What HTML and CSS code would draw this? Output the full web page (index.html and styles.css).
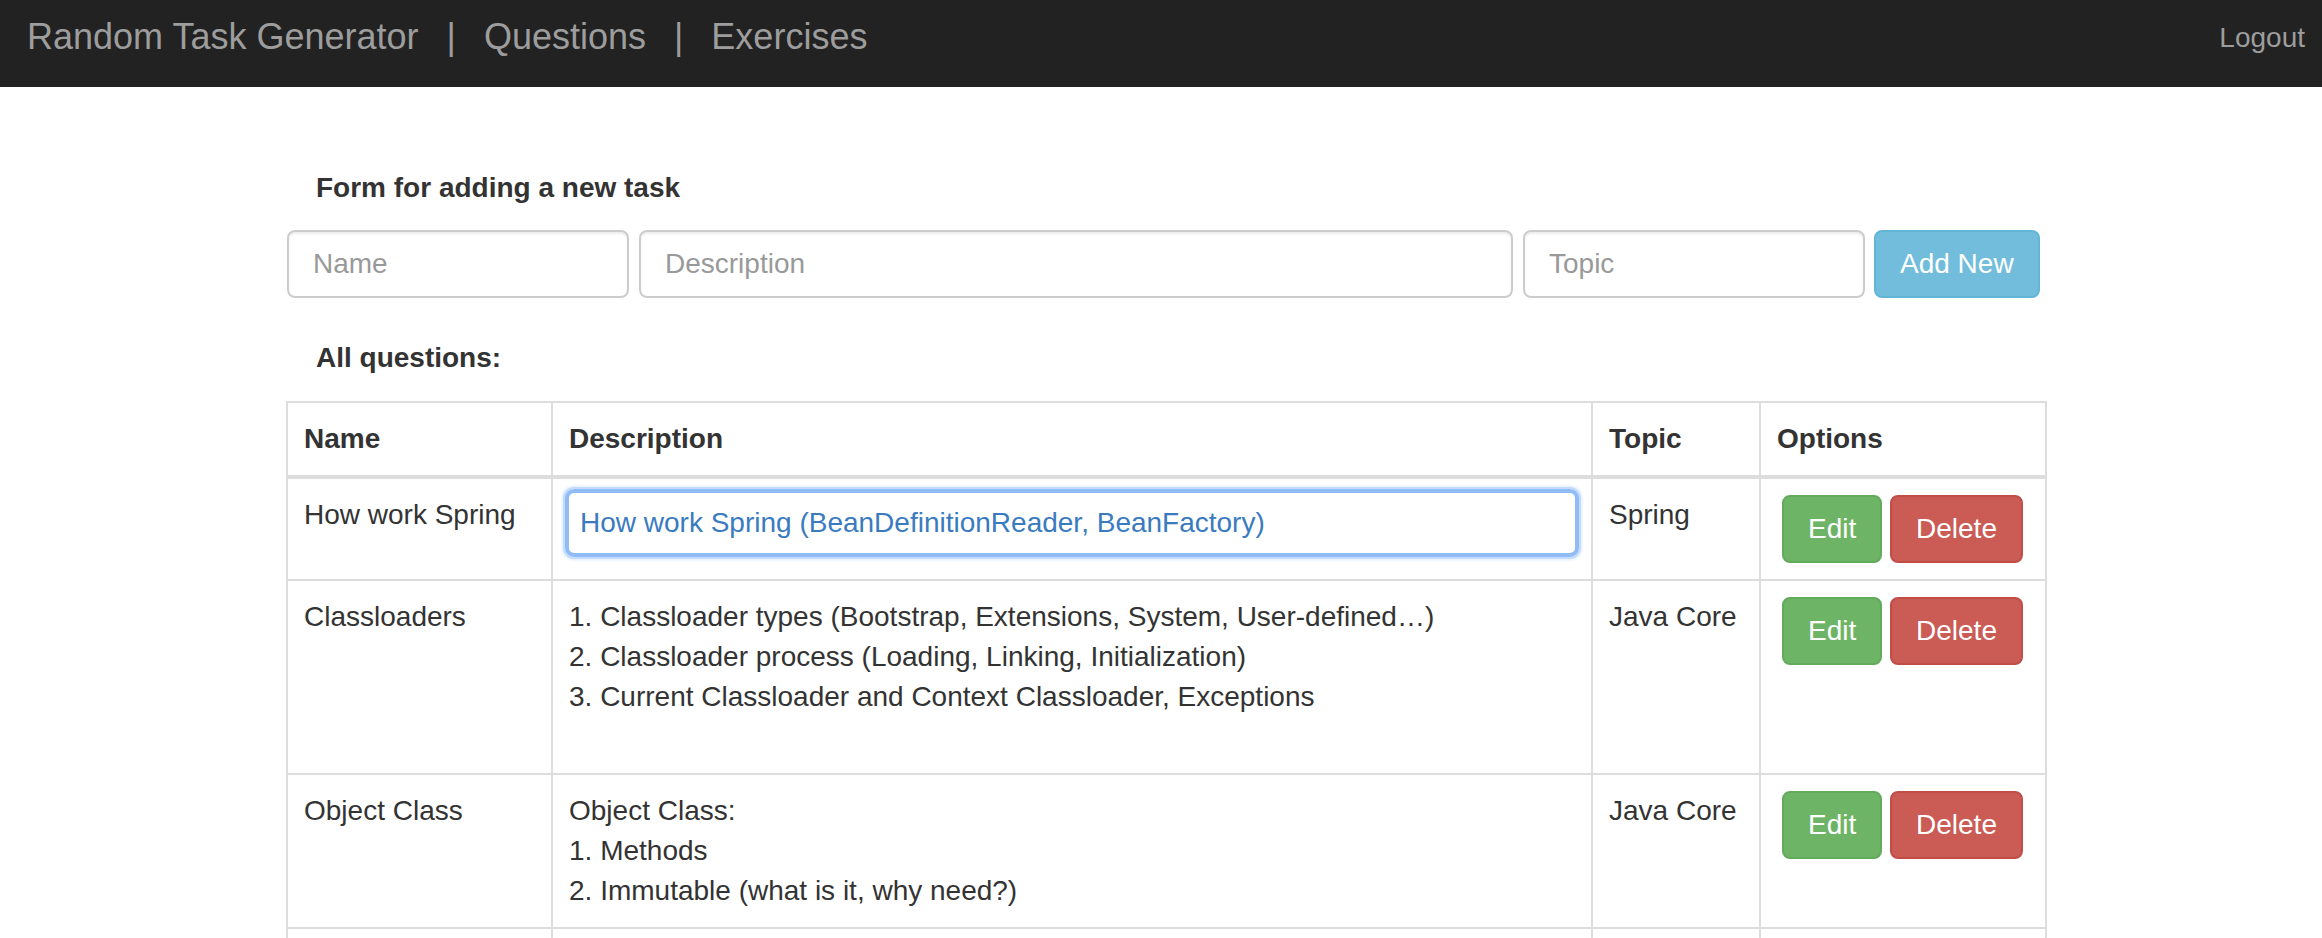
FILE: index.html
```html
<!DOCTYPE html>
<html lang="en">
<head>
<meta charset="utf-8">
<title>Random Task Generator - Questions</title>
<link rel="stylesheet" href="styles.css">
</head>
<body>
<nav class="navbar">
  <div class="nav-left">
    <a class="nav-brand" href="#">Random Task Generator</a>
    <span class="nav-sep">|</span>
    <a class="nav-link" href="#">Questions</a>
    <span class="nav-sep">|</span>
    <a class="nav-link" href="#">Exercises</a>
  </div>
  <a class="nav-logout" href="#">Logout</a>
</nav>

<main class="main">
  <h4 class="section-title form-title">Form for adding a new task</h4>
  <form class="add-form">
    <input class="field field-name" type="text" placeholder="Name">
    <input class="field field-desc" type="text" placeholder="Description">
    <input class="field field-topic" type="text" placeholder="Topic">
    <button class="btn btn-info" type="button">Add New</button>
  </form>

  <h4 class="section-title all-title">All questions:</h4>

  <table class="tasks">
    <colgroup>
      <col class="col-name">
      <col class="col-desc">
      <col class="col-topic">
      <col class="col-options">
    </colgroup>
    <thead>
      <tr>
        <th>Name</th>
        <th>Description</th>
        <th>Topic</th>
        <th>Options</th>
      </tr>
    </thead>
    <tbody>
      <tr>
        <td>How work Spring</td>
        <td><div class="desc-edit">How work Spring (BeanDefinitionReader, BeanFactory)</div></td>
        <td>Spring</td>
        <td><div class="actions"><button class="btn btn-success" type="button">Edit</button> <button class="btn btn-danger" type="button">Delete</button></div></td>
      </tr>
      <tr>
        <td>Classloaders</td>
        <td>1. Classloader types (Bootstrap, Extensions, System, User-defined…)<br>2. Classloader process (Loading, Linking, Initialization)<br>3. Current Classloader and Context Classloader, Exceptions<br>&nbsp;</td>
        <td>Java Core</td>
        <td><div class="actions"><button class="btn btn-success" type="button">Edit</button> <button class="btn btn-danger" type="button">Delete</button></div></td>
      </tr>
      <tr>
        <td>Object Class</td>
        <td>Object Class:<br>1. Methods<br>2. Immutable (what is it, why need?)</td>
        <td>Java Core</td>
        <td><div class="actions"><button class="btn btn-success" type="button">Edit</button> <button class="btn btn-danger" type="button">Delete</button></div></td>
      </tr>
      <tr>
        <td>&nbsp;</td>
        <td>&nbsp;</td>
        <td>&nbsp;</td>
        <td>&nbsp;</td>
      </tr>
    </tbody>
  </table>
</main>
</body>
</html>
```

FILE: styles.css
```css
* {
  box-sizing: border-box;
}

body {
  margin: 0;
  background: #fff;
  color: #333;
  font-family: "Liberation Sans", Arial, Helvetica, sans-serif;
  font-size: 28px;
  line-height: 40px;
}

/* ---------- navbar ---------- */
.navbar {
  height: 87px;
  background: #222;
  display: flex;
  align-items: flex-start;
  padding: 17px 17px 0 27px;
}

.nav-left {
  display: flex;
  gap: 28px;
  font-size: 36px;
  line-height: 40px;
  color: #9d9d9d;
}

.nav-brand,
.nav-link {
  color: #9d9d9d;
  text-decoration: none;
}

.nav-sep {
  color: #9d9d9d;
}

.nav-logout {
  margin-left: auto;
  margin-top: 1px;
  font-size: 28px;
  line-height: 40px;
  color: #9d9d9d;
  text-decoration: none;
}

/* ---------- main ---------- */
.main {
  width: 1759px;
  margin-left: 286px;
  padding-top: 81px;
}

.section-title {
  margin: 0;
  padding-left: 30px;
  font-size: 28px;
  line-height: 40px;
  font-weight: bold;
}

.form-title {
  margin-bottom: 22px;
}

.all-title {
  margin-top: 40px;
}

/* ---------- form ---------- */
.add-form {
  display: flex;
  margin: 0;
  padding-left: 1px;
}

.field {
  height: 68px;
  padding: 0 24px;
  border: 2px solid #ccc;
  border-radius: 8px;
  background: #fff;
  color: #555;
  font-family: "Liberation Sans", Arial, Helvetica, sans-serif;
  font-size: 28px;
  box-shadow: inset 0 2px 2px rgba(0, 0, 0, 0.075);
  outline: none;
}

.field::placeholder {
  color: #999;
}

.field-name {
  width: 342px;
  margin-right: 10px;
}

.field-desc {
  width: 874px;
  margin-right: 10px;
}

.field-topic {
  width: 342px;
  margin-right: 9px;
}

/* ---------- buttons ---------- */
.btn {
  display: inline-block;
  height: 68px;
  padding: 0 24px;
  border: 2px solid transparent;
  border-radius: 8px;
  color: #fff;
  font-family: "Liberation Sans", Arial, Helvetica, sans-serif;
  font-size: 28px;
  line-height: 64px;
  vertical-align: top;
  cursor: pointer;
}

.btn-info {
  background: #71bddb;
  border-color: #63b5d6;
}

.btn-success {
  background: #6db466;
  border-color: #61ab5b;
}

.btn-danger {
  background: #cb5b55;
  border-color: #c24c46;
}

.actions {
  margin-left: 5px;
  white-space: nowrap;
}

/* ---------- table ---------- */
.tasks {
  width: 1759px;
  margin-top: 23px;
  border-collapse: collapse;
  table-layout: fixed;
}

.col-name { width: 265px; }
.col-desc { width: 1040px; }
.col-topic { width: 168px; }
.col-options { width: 286px; }

.tasks th,
.tasks td {
  border: 2px solid #ddd;
  padding: 16px;
  text-align: left;
  vertical-align: top;
  line-height: 40px;
}

.tasks th {
  font-weight: bold;
  border-bottom-width: 4px;
}

.desc-edit {
  height: 68px;
  margin: -6px -4px -6px -4px;
  padding: 0 11px;
  border: 4px solid #8fbcf6;
  border-radius: 9px;
  box-shadow: 0 0 0 2px #c4dbfc, 0 0 3px 3px rgba(160, 200, 250, 0.35);
  color: #3a7bbf;
  line-height: 60px;
  white-space: nowrap;
  overflow: hidden;
}
```
